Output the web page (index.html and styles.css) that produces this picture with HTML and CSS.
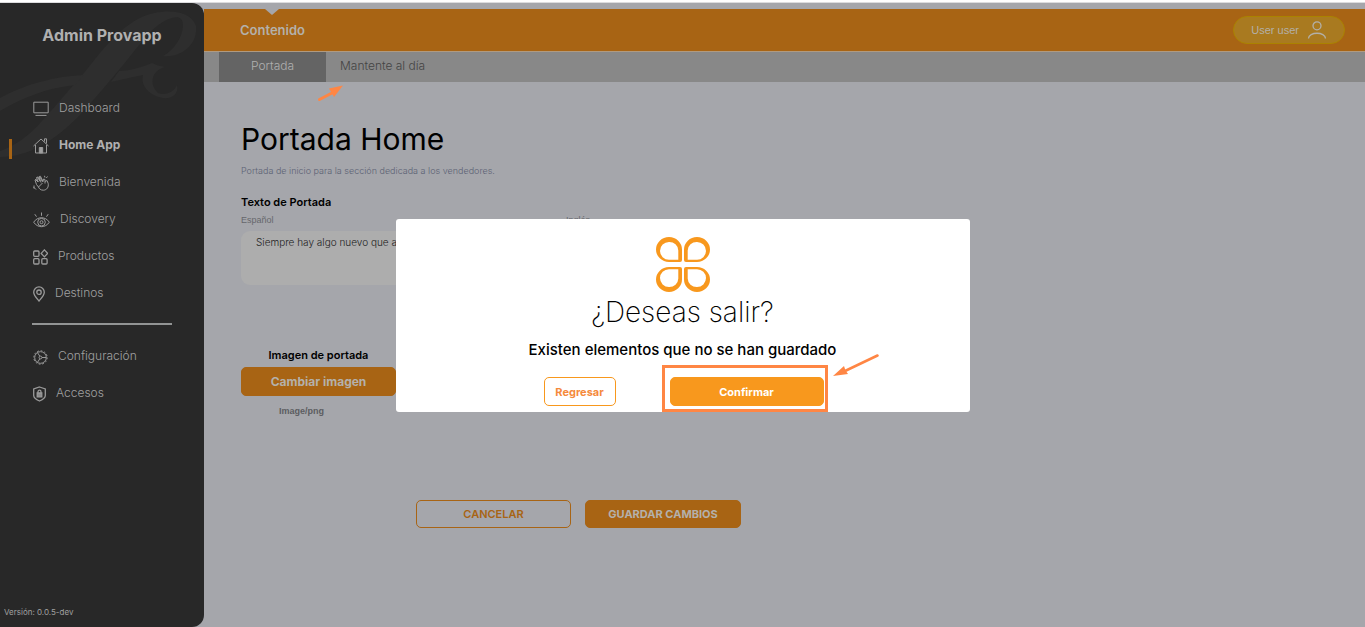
FILE: index.html
```html
<!DOCTYPE html>
<html lang="es">
<head>
    <meta charset="UTF-8">
    <meta name="viewport" content="width=device-width, initial-scale=1.0">
    <title>Admin Provapp</title>
    <link rel="stylesheet" href="styles.css">
</head>
<body>

    <div class="app">
        <aside class="sidebar">
            <svg class="sidebar-deco" width="204" height="170" viewBox="0 3 204 170" fill="#2e2e2e" aria-hidden="true">
                <path fill-rule="evenodd" d="M0 151 C14 146 28 137 42 121 C60 101 72 86 84 73 C102 50 120 27 142 17 C160 9 190 8 196 26 C198 42 184 58 163 56 C174 50 183 37 183 25 C183 18 178 16 172 18 C154 23 142 42 128 59 C112 78 96 98 78 117 C56 139 30 157 0 157Z"/>
                <path d="M0 98 C25 84 56 76 84 75 L75 85 C48 88 23 97 0 111Z"/>
                <path d="M119 71 C130 71 142 67 152 63 C156 65 160 66 165 67 C151 71 149 84 158 93 C166 96 174 92 177 85 C179 94 172 99 163 98 C151 96 140 87 143 75 C133 77 123 79 111 82Z"/>
            </svg>
            <h2 class="brand">Admin Provapp</h2>
            <nav class="menu">
                <a href="#" class="menu-item">
                    <svg width="16" height="16" viewBox="0 0 16 16"><path d="M.8 1.2h14.4v10.6H.8zM2.500 14.400h11"/></svg>
                    Dashboard
                </a>
                <a href="#" class="menu-item active">
                    <svg width="16" height="16" viewBox="0 0 16 16"><path d="M.5 8 8 1l7.500 7M11.500 3.500V.8h2v4.700M2.500 7v8h11V7"/><path d="M6.300 9.500h3.400V15H6.300z" fill="#a0a0a0"/></svg>
                    Home App
                </a>
                <a href="#" class="menu-item">
                    <svg width="16" height="16" viewBox="0 0 16 16"><path d="M3.500 9.500 2 5l1.200-.6 2 2.600L3.500 2.500 5 2l2.300 4-1.200-4.500 1.400-.2L10 6.500l.5-2.500 1.500.5v4M5 7 2.500 4.500M8 7.500 4.500 2.500M9.500 7 7 2M3.500 9.500l2 2.500M12 6.500l2-1 1.200 3c.6 3.500-1.200 6.500-4.700 6.700-3 .1-4.500-1.700-5-3.200l4-4M1 10.500v3M.5 12l2.500 2.500M11.500.8l.4 1.700M14.500 1.500 13.300 3"/></svg>
                    Bienvenida
                </a>
                <a href="#" class="menu-item">
                    <svg width="17" height="16" viewBox="0 0 17 16"><path d="M.7 10.200C4.500 4.200 12.500 4.200 16.300 10.200 12.500 16.200 4.500 16.200.7 10.200zM8.500.5v3.300M1.800 2.200l1.700 2.500M15.200 2.200l-1.700 2.500"/><circle cx="8.500" cy="10.200" r="3.800"/><circle cx="8.500" cy="10.200" r="1.500"/></svg>
                    Discovery
                </a>
                <a href="#" class="menu-item">
                    <svg class="bold-icon" width="15" height="16" viewBox="0 0 15 16"><rect x=".7" y="2" width="5.300" height="5.300" rx="1"/><rect x=".7" y="9.700" width="5.300" height="5.300" rx="1"/><rect x="8.800" y="9.700" width="5.300" height="5.300" rx="1"/><path d="m11.400.9 3.200 3.500-3.200 3.500-3.200-3.500z"/></svg>
                    Productos
                </a>
                <a href="#" class="menu-item">
                    <svg class="bold-icon" width="12" height="16" viewBox="0 0 12 16"><path d="M6 15C3.500 12 .7 9.300.7 6.200a5.300 5.300 0 0 1 10.600 0C11.300 9.300 8.500 12 6 15z"/><circle cx="6" cy="6.200" r="2.200"/></svg>
                    Destinos
                </a>
                <hr class="menu-line">
                <a href="#" class="menu-item">
                    <svg width="15" height="16" viewBox="0 0 15 16"><circle cx="7.500" cy="8.500" r="5.800"/><circle cx="7.500" cy="8.500" r="6.700" stroke-dasharray="1.750 1.750"/><circle cx="7.500" cy="8.500" r="1.400"/><path d="M9 8.500h4.200M6.800 7.200 4.500 3.700M6.800 9.800l-2.300 3.500"/></svg>
                    Configuración
                </a>
                <a href="#" class="menu-item">
                    <svg class="bold-icon" width="13" height="16" viewBox="0 0 13 16"><path d="M6.500 1 12.300 3v6.500c0 2.500-2.800 4.300-5.800 5.500C3.500 13.800.7 12 .7 9.500V3zM5 7V5.700a1.500 1.500 0 0 1 3 0V7"/><path d="M4.200 7h4.600v3.800H4.200z" fill="#8c8c8c"/></svg>
                    Accesos
                </a>
            </nav>
            <p class="version">Versión: 0.0.5-dev</p>
        </aside>

        <div class="main">
            <header class="topbar">
                <a href="#" class="topbar-link">Contenido</a>
                <button type="button" class="user-btn">
                    User user
                    <svg width="20" height="18" viewBox="0 0 20 18"><circle cx="10" cy="4.800" r="4"/><path d="M1.500 17.500c0-7 17-7 17 0"/></svg>
                </button>
            </header>
            <nav class="tabs">
                <a href="#" class="tab active">Portada</a>
                <a href="#" class="tab">Mantente al día
                    <svg class="tab-arrow" width="28" height="18" viewBox="0 0 28 18"><path d="M2.500 14.500 15 8" stroke="#ff8644" stroke-width="3" stroke-linecap="round"/><path d="m12 3.500 14-3L17 12z" fill="#ff8644"/></svg>
                </a>
            </nav>

            <main class="content">
                <h1>Portada Home</h1>
                <p class="subtitle">Portada de inicio para la sección dedicada a los vendedores.</p>

                <form>
                    <h3>Texto de Portada</h3>
                    <div class="fields">
                        <div class="field">
                            <label for="textoEs">Español</label>
                            <textarea id="textoEs" name="textoEs">Siempre hay algo nuevo que aprender</textarea>
                        </div>
                        <div class="field">
                            <label for="textoEn">Inglés</label>
                            <textarea id="textoEn" name="textoEn"></textarea>
                        </div>
                    </div>

                    <div class="image-box">
                        <h3>Imagen de portada</h3>
                        <button type="button" class="btn btn-dark">Cambiar imagen</button>
                        <p class="image-type">Image/png</p>
                    </div>

                    <div class="actions">
                        <button type="button" class="btn btn-cancel">CANCELAR</button>
                        <button type="submit" class="btn btn-dark">GUARDAR CAMBIOS</button>
                    </div>
                </form>
            </main>
        </div>
    </div>

    <!-- Modal de salida -->
    <div class="overlay">
        <div class="modal" role="dialog" aria-labelledby="modalTitle">
            <svg class="modal-logo" width="54" height="55" viewBox="0 0 54 55" fill="#f8981d" fill-rule="evenodd">
                <path id="petal" d="M13 0A13 12.500 0 0 0 13 25H24Q26 25 26 23V12.500A13 12.500 0 0 0 13 0zM13 5A9 8.700 0 0 1 22.300 13.500V22.800H13A9 8.900 0 0 1 13 5z"/>
                <use href="#petal" transform="translate(54 0) scale(-1 1)"/>
                <use href="#petal" transform="translate(0 55) scale(1 -1)"/>
                <use href="#petal" transform="translate(54 55) scale(-1 -1)"/>
            </svg>
            <h2 id="modalTitle">¿Deseas salir?</h2>
            <p class="modal-text">Existen elementos que no se han guardado</p>
            <div class="modal-actions">
                <button type="button" class="btn btn-back">Regresar</button>
                <div class="confirm-wrap">
                    <button type="button" class="btn btn-confirm">Confirmar</button>
                    <span class="highlight"></span>
                    <svg class="confirm-arrow" width="46" height="24" viewBox="0 0 46 24"><path d="M44.500 1.500 12 17" stroke="#ff8644" stroke-width="2.500" stroke-linecap="round"/><path d="M0 22 11 12l1.500 4.500L15 20z" fill="#ff8644"/></svg>
                </div>
            </div>
        </div>
    </div>

</body>
</html>
```
FILE: styles.css
```css
* {
    box-sizing: border-box;
}

body {
    margin: 0;
    padding-top: 2px;
    font-family: Inter, 'Liberation Sans', sans-serif;
    background: #fff;
}

h1, h2, h3, p {
    margin: 0;
}

a {
    text-decoration: none;
}

.app {
    display: flex;
    min-height: calc(100vh - 2px);
    background: #a5a6ab;
    border-top: 1px solid #dcdcde;
}

/* Menu lateral */
.sidebar {
    position: relative;
    display: flex;
    flex-direction: column;
    flex: 0 0 204px;
    background: #282828;
    border-radius: 0 12px 12px 0;
    overflow: hidden;
}

.sidebar-deco {
    position: absolute;
    top: 0;
    left: 0;
}

.brand {
    position: relative;
    padding-top: 22px;
    font-size: 16px;
    line-height: 20px;
    text-align: center;
    color: #b0b0b0;
}

.menu {
    position: relative;
    padding-top: 44px;
}

.menu-item {
    position: relative;
    display: flex;
    align-items: center;
    gap: 10px;
    height: 37px;
    padding-left: 33px;
    font-size: 12px;
    font-weight: 300;
    color: #a0a0a0;
}

.menu-item svg {
    margin-top: 2px;
    fill: none;
    stroke: #9a9a9a;
}

.menu-item .bold-icon {
    stroke-width: 1.3px;
}

.menu-item.active {
    font-weight: 700;
    color: #b0b0b0;
}

.menu-item.active::before {
    content: "";
    position: absolute;
    left: 9px;
    top: 13px;
    width: 3px;
    height: 20px;
    background: #a86414;
}

.menu-line {
    height: 2px;
    margin: 12px 32px;
    border: 0;
    background: #929494;
}

.version {
    margin-top: auto;
    padding: 0 4px 8px;
    font-size: 8px;
    line-height: 14px;
    font-weight: 400;
    color: #a0a0a0;
}

/* Barra superior */
.main {
    flex: 1;
    min-width: 0;
    padding-top: 6px;
}

.topbar {
    position: relative;
    display: flex;
    align-items: center;
    justify-content: space-between;
    height: 43px;
    padding: 0 20px 0 36px;
    background: #a86414;
    border-bottom: 1px solid #b09a80;
}

.topbar-link {
    position: relative;
    font-size: 13px;
    font-weight: 600;
    color: #b4b1ab;
}

.topbar-link::before {
    content: "";
    position: absolute;
    top: -13px;
    left: 50%;
    margin-left: -7px;
    border: 7px solid transparent;
    border-top: 6px solid #a5a6ab;
    border-bottom: 0;
}

.user-btn {
    display: flex;
    align-items: center;
    gap: 8px;
    height: 28px;
    padding: 0 17px;
    border: 1px solid #ab8200;
    border-radius: 14px;
    background: #a97a20;
    font-family: 'Liberation Sans', sans-serif;
    font-size: 11px;
    color: #b3b0a8;
}

.user-btn svg {
    fill: none;
    stroke: #b3b0a8;
    stroke-width: 1.3px;
}

.tabs {
    display: flex;
    height: 30px;
    padding-left: 15px;
    background: #888;
}

.tab {
    position: relative;
    padding: 0 14px;
    font-size: 12px;
    line-height: 28px;
    font-weight: 300;
    color: #444;
}

.tab.active {
    width: 107px;
    text-align: center;
    background: #646464;
    color: #b0b0b0;
}

.tab-arrow {
    position: absolute;
    left: -9px;
    top: 33px;
    fill: none;
}

/* Contenido */
.content {
    padding: 38px 37px;
}

h1 {
    font-size: 30px;
    line-height: 38px;
    font-weight: 400;
}

.subtitle {
    margin-top: 4px;
    font-size: 9px;
    line-height: 18px;
    font-weight: 300;
    color: #5c6274;
}

h3 {
    font-size: 11px;
    line-height: 16px;
    font-weight: 600;
}

form h3 {
    margin-top: 14px;
}

.fields {
    display: flex;
    gap: 25px;
}

.field {
    width: 300px;
}

.field label {
    display: block;
    font-family: 'Liberation Sans', sans-serif;
    font-size: 9px;
    line-height: 21px;
    color: #66676c;
}

.field textarea {
    display: block;
    width: 100%;
    height: 54px;
    padding: 3px 15px;
    border: 0;
    border-radius: 9px;
    background: #adadad;
    font-family: Inter, 'Liberation Sans', sans-serif;
    font-size: 10px;
    line-height: 16px;
    font-weight: 300;
    color: #222;
    resize: none;
}

.image-box {
    width: 155px;
    margin-top: 62px;
    text-align: center;
}

.btn {
    height: 29px;
    padding: 0;
    border: 1px solid #f8981d;
    border-radius: 5px;
    font-family: Inter, 'Liberation Sans', sans-serif;
    font-size: 11px;
    font-weight: 700;
    cursor: pointer;
}

.btn-dark {
    width: 155px;
    border-color: #a86414;
    background: #a86414;
    color: #b4b1ab;
}

.image-box .btn {
    margin-top: 4px;
    font-size: 12px;
}

.image-type {
    margin-top: 7px;
    padding-right: 34px;
    font-family: 'Liberation Sans', sans-serif;
    font-size: 9px;
    line-height: 16px;
    font-weight: 700;
    color: #5c5d61;
}

.actions {
    display: flex;
    gap: 14px;
    margin: 81px 0 0 175px;
}

.actions .btn {
    width: 156px;
    height: 28px;
}

.actions .btn-cancel {
    width: 155px;
    border-color: #a86414;
    background: none;
    color: #a86414;
    font-weight: 600;
}

/* Modal */
.overlay {
    position: fixed;
    inset: 4px 0 0;
    display: flex;
    align-items: center;
    justify-content: center;
}

.modal {
    width: 574px;
    max-width: 90%;
    padding: 18px 0 6px;
    border-radius: 3px;
    background: #fff;
    text-align: center;
}

.modal-logo {
    display: block;
    margin: 0 auto;
}

.modal h2 {
    font-size: 28px;
    line-height: 40px;
    font-weight: 200;
}

.modal-text {
    margin-top: 8px;
    font-size: 15px;
    line-height: 20px;
    font-weight: 500;
}

.modal-actions {
    display: flex;
    justify-content: center;
    gap: 54px;
    margin-top: 17px;
    padding-left: 2px;
}

.btn-back {
    width: 72px;
    background: #fff;
    color: #f58a3c;
}

.confirm-wrap {
    position: relative;
}

.btn-confirm {
    width: 154px;
    background: #f8981d;
    color: #fff;
}

/* Recuadro y flecha sobre el boton */
.highlight {
    position: absolute;
    inset: -12px -4px -6px -8px;
    border: 3px solid #ff8644;
}

.confirm-arrow {
    position: absolute;
    left: 163px;
    top: -23px;
    fill: none;
}
```
